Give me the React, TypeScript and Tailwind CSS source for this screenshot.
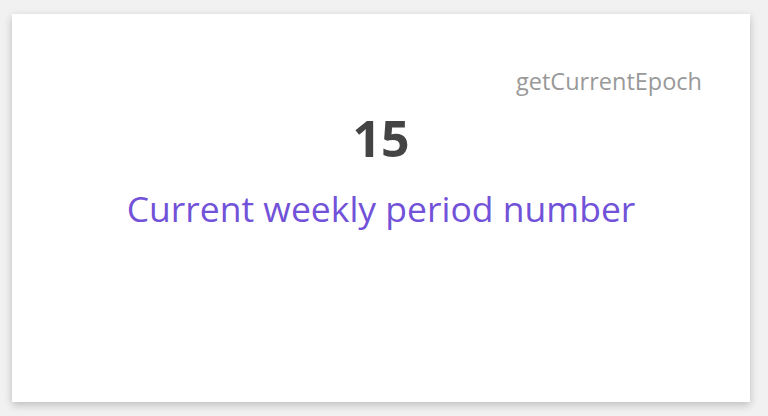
export default function App() {
  return (
    <div className="min-h-screen bg-[#f1f1f1] pl-3 pr-[18px] pt-[14px] pb-[14px] font-['Open_Sans',sans-serif]">
      <div className="flex h-[388px] w-[738px] flex-col bg-white px-12 pt-[52px] shadow-[0_3px_8px_rgba(0,0,0,0.22)]">
        <p className="text-right text-[23.5px] leading-[30px] text-[#999999]">getCurrentEpoch</p>
        <p className="mt-[12px] text-center text-[50px] font-bold leading-[60px] text-[#444444]">15</p>
        <p className="mt-[18px] text-center text-[35.5px] leading-[44px] text-[#7152d8]">
          Current weekly period number
        </p>
      </div>
    </div>
  );
}
